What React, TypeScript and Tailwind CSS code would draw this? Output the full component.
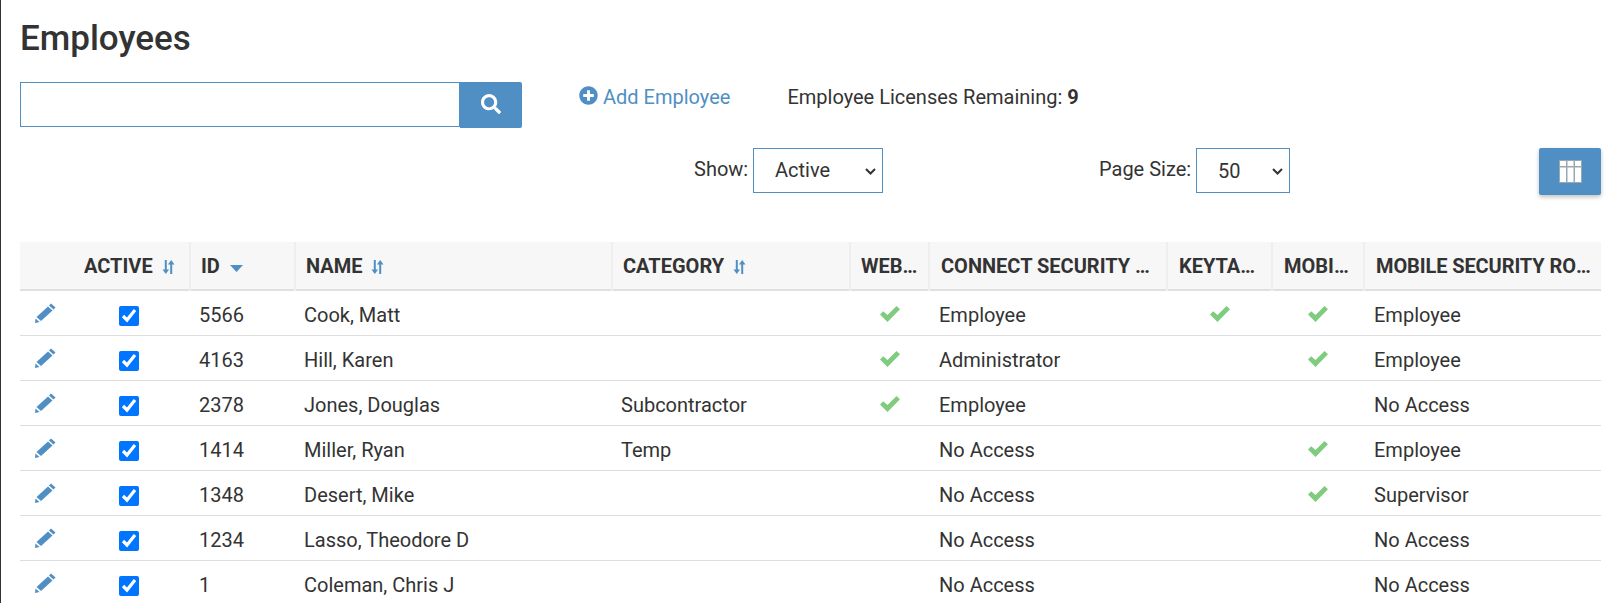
import { FaSearch, FaPlusCircle } from "react-icons/fa";

const Sort = () => (
  <svg viewBox="0 0 13 14" className="w-[13px] h-[14px] inline-block ml-[9px] align-[-1px] text-[#4f8fc4]" fill="currentColor">
    <path d="M2.8 0h2v9.5h2.3L3.8 14 .5 9.5h2.3z" />
    <path d="M8.2 14h2V4.5h2.3L9.2 0 5.9 4.5h2.3z" />
  </svg>
);
const Caret = () => (
  <svg viewBox="0 0 13 7" className="w-[13px] h-[7px] inline-block ml-[10px] align-[1px] text-[#4f8fc4]" fill="currentColor">
    <path d="M0 0h13L6.5 7z" />
  </svg>
);
const Check = () => (
  <svg viewBox="0 0 20 16" className="w-[20px] h-[16px] inline-block text-[#7fcc7f]" fill="currentColor">
    <path d="M0 8.5 3.2 5.2 7.5 9 16.5 0 20 3.2 7.5 16z" />
  </svg>
);
const Pencil = () => (
  <svg viewBox="0 0 21 20" className="w-[21px] h-[20px] block text-[#4f8fc4]" fill="currentColor">
    <path d="M16 0.5 20.5 4.5 18.5 6.5 14 2.5z" />
    <path d="M13 3.5 17.5 7.5 6 18 1.5 14z" />
    <path d="M0.5 15.5 4.5 19 0 20z" />
  </svg>
);
const Chevron = () => (
  <svg viewBox="0 0 11 7" className="absolute right-[7px] top-[20px] w-[11px] h-[7px] pointer-events-none" fill="none" stroke="#333" strokeWidth="2">
    <path d="M1 1l4.5 4.5L10 1" />
  </svg>
);

const headers: { label: string; sort?: "s" | "c"; cls: string }[] = [
  { label: "", cls: "w-[64px] px-[10px]" },
  { label: "ACTIVE", sort: "s", cls: "w-[106px] pl-0 pr-[6px]" },
  { label: "ID", sort: "c", cls: "w-[105px] border-l-2 px-[10px]" },
  { label: "NAME", sort: "s", cls: "w-[317px] border-l-2 px-[10px]" },
  { label: "CATEGORY", sort: "s", cls: "w-[238px] border-l-2 px-[10px]" },
  { label: "WEB ACCESS", cls: "w-[79px] border-l-2 px-[10px]" },
  { label: "CONNECT SECURITY ROLE", cls: "w-[238px] border-l-2 pl-[11px] pr-[10px]" },
  { label: "KEYTAB ACCESS", cls: "w-[105px] border-l-2 pl-[11px] pr-[10px]" },
  { label: "MOBILE ACCESS", cls: "w-[92px] border-l-2 pl-[11px] pr-[10px]" },
  { label: "MOBILE SECURITY ROLE", cls: "w-[237px] border-l-2 pl-[11px] pr-[10px] tracking-[-0.1px]" },
];

const rows = [
  ["5566", "Cook, Matt", "", true, "Employee", true, true, "Employee"],
  ["4163", "Hill, Karen", "", true, "Administrator", false, true, "Employee"],
  ["2378", "Jones, Douglas", "Subcontractor", true, "Employee", false, false, "No Access"],
  ["1414", "Miller, Ryan", "Temp", false, "No Access", false, true, "Employee"],
  ["1348", "Desert, Mike", "", false, "No Access", false, true, "Supervisor"],
  ["1234", "Lasso, Theodore D", "", false, "No Access", false, false, "No Access"],
  ["1", "Coleman, Chris J", "", false, "No Access", false, false, "No Access"],
] as const;

export default function App() {
  return (
    <div className="relative h-[603px] overflow-hidden bg-white border-l border-[#333] pl-[19px] pr-[18px] font-['Roboto',sans-serif] text-[20px] text-[#333]">
      <div className="absolute left-[-1px] top-[253px] w-[1px] h-[15px] bg-[#8a8468]" />
      <div className="absolute left-[-1px] top-[280px] w-[1px] h-[28px] bg-[#0f4c75]" />
      <h1 className="text-[35px] leading-[40px] pt-[19px] font-medium h-[82px]">Employees</h1>
      <div className="flex items-start h-[66px]">
        <div className="flex w-[502px] h-[46px]">
          <input className="flex-1 min-w-0 h-[45px] border border-[#4f8fc4] outline-none" />
          <button className="w-[62px] h-[46px] bg-[#4f8fc4] rounded-r-[2px] flex items-center justify-center text-white">
            <FaSearch className="w-[20px] h-[20px] -translate-y-px" />
          </button>
        </div>
        <a className="ml-[57px] mt-[1px] flex items-center h-[27px] text-[#4f8fc4] whitespace-nowrap">
          <FaPlusCircle className="w-[19px] h-[19px] mr-[5px] -translate-y-px" />
          Add Employee
        </a>
        <div className="ml-[57px] mt-[2px] h-[27px] leading-[27px] whitespace-nowrap">
          Employee Licenses Remaining: <b className="font-bold">9</b>
        </div>
      </div>
      <div className="flex items-start h-[94px] pl-[674px]">
        <span className="leading-[43px] w-[59px]">Show:</span>
        <div className="relative">
          <select className="appearance-none block w-[130px] h-[45px] border border-[#4f8fc4] pl-[21px] pb-[2px] bg-white text-[#333] outline-none">
            <option>Active</option>
          </select>
          <Chevron />
        </div>
        <span className="leading-[43px] ml-[216px] w-[97px] whitespace-nowrap">Page Size:</span>
        <div className="relative">
          <select className="appearance-none block w-[94px] h-[45px] border border-[#4f8fc4] pl-[21px] bg-white text-[#333] outline-none">
            <option>50</option>
          </select>
          <Chevron />
        </div>
        <button className="ml-[249px] w-[62px] h-[47px] bg-[#4f8fc4] rounded-[2px] shadow-[0_2px_4px_rgba(0,0,0,0.25)] flex items-center justify-center">
          <svg viewBox="0 0 23 23" className="w-[23px] h-[23px]">
            <rect width="23" height="23" fill="#9aa8b2" />
            <path fill="#fff" d="M1 1h6v5H1zM8.5 1h6v5h-6zM16 1h6v5h-6zM1 7.5h6V22H1zM8.5 7.5h6V22h-6zM16 7.5h6V22h-6z" />
          </svg>
        </button>
      </div>
      <table className="table-fixed w-[1581px] border-collapse">
        <thead>
          <tr className="bg-[#f7f7f7] h-[48px] border-b-2 border-[#e0e0e0]">
            {headers.map((h, i) => (
              <th key={i} className={`${h.cls} border-[#eeeeee] text-left font-bold text-[20px] whitespace-nowrap overflow-hidden text-ellipsis`}>
                {h.label}
                {h.sort === "s" && <Sort />}
                {h.sort === "c" && <Caret />}
              </th>
            ))}
          </tr>
        </thead>
        <tbody>
          {rows.map((r) => (
            <tr key={r[0]} className="h-[45px] border-b border-[#dddddd]">
              <td className="pl-[15px]"><Pencil /></td>
              <td className="pl-[35px] pt-[6px]"><input type="checkbox" checked readOnly className="w-5 h-5 block m-0" /></td>
              <td className="pl-[9px] pt-[4px]">{r[0]}</td>
              <td className="pl-[9px] pt-[4px]">{r[1]}</td>
              <td className="pl-[9px] pt-[4px]">{r[2]}</td>
              <td className="text-center">{r[3] && <Check />}</td>
              <td className="pl-[10px] pt-[4px]">{r[4]}</td>
              <td className="text-center">{r[5] && <Check />}</td>
              <td className="text-center">{r[6] && <Check />}</td>
              <td className="pl-[10px] pt-[4px]">{r[7]}</td>
            </tr>
          ))}
        </tbody>
      </table>
    </div>
  );
}
